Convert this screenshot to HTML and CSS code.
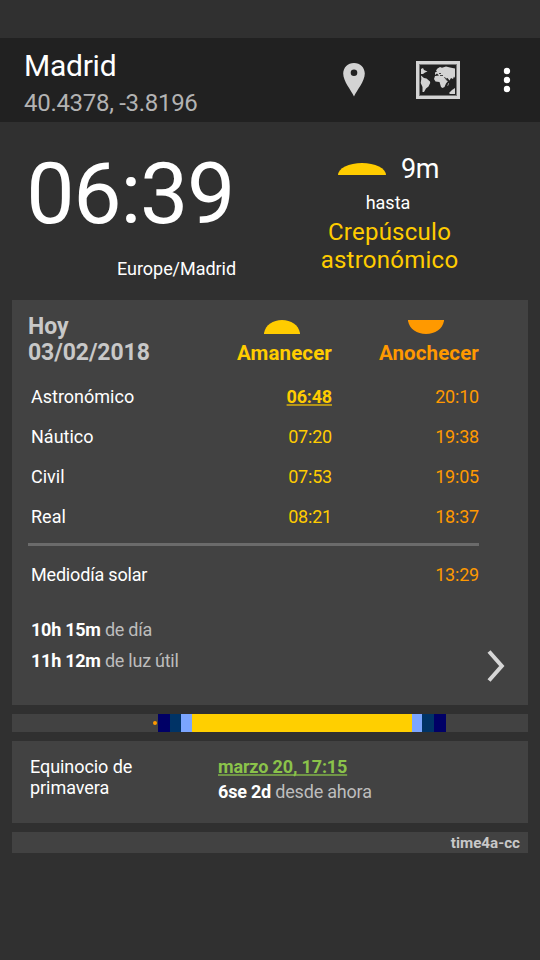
FILE: index.html
```html
<!DOCTYPE html>
<html lang="es">
<head>
<meta charset="utf-8">
<title>Madrid</title>
<link rel="stylesheet" href="styles.css">
</head>
<body>
<header class="appbar">
  <div class="place">
    <h1 class="place-name">Madrid</h1>
    <div class="place-coords">40.4378, -3.8196</div>
  </div>
  <svg class="icon-pin" width="24" height="36" viewBox="0 0 24 36"><path fill="#d3d3d3" fill-rule="evenodd" d="M12 1C5.800 1 1.200 5.600 1.200 11.600C1.200 19.500 9.300 28.500 12 34.500C14.700 28.500 22.800 19.500 22.800 11.600C22.800 5.600 18.200 1 12 1ZM12 7.400A3.300 3.300 0 1 1 12 14A3.300 3.300 0 1 1 12 7.400Z"/></svg>
  <svg class="icon-map" width="44" height="38" viewBox="0 0 44 38">
    <rect x="1.500" y="1.500" width="41" height="35" fill="none" stroke="#d3d3d3" stroke-width="3"/>
    <rect x="3.500" y="3.500" width="37" height="31" fill="none" stroke="#777" stroke-width="1"/>
    <g fill="#d3d3d3">
      <path d="M5 8L7 7L8 9L11.500 10.500L9 11.500L7 13L5 13Z"/>
      <path d="M5 14.500L8 17L10.500 17.500L14 20.500L14.200 22L12.500 25.500L10 27.500L8 31L6.500 31L6.500 26L4.700 22L5.300 18Z"/>
      <path d="M19 11.500L21 10.500L20 9.500L21.500 7.500L24 6L26 6.800L30 5.500L34 6.500L39 7.500V17L38 15.500L37 18L35 17L33.500 19.500L31.500 17L30 17.500L30.500 19.500L32 20L30 22.500L28.500 26L26.500 27L25 26L23.500 21L19.500 20.500L18 18L19 15L23 14.500L21 12.500L19 14Z"/>
      <path d="M33 32L36 29L39 27V33H34Z"/>
      <path d="M32 22.500L33 22L32 25H31.500Z"/>
    </g>
    <path fill="none" stroke="#212121" stroke-width=".8" d="M23 12.500H25M24 14.500H27M28.500 16L30 18.500"/>
  </svg>
  <svg class="icon-more" width="8" height="26" viewBox="0 0 8 26" fill="#fff"><circle cx="4" cy="4" r="3.200"/><circle cx="4" cy="13" r="3.200"/><circle cx="4" cy="22" r="3.200"/></svg>
</header>

<section class="now">
  <div class="clock">
    <div class="clock-time">06:39</div>
    <div class="clock-zone">Europe/Madrid</div>
  </div>
  <div class="next">
    <div class="next-head">
      <svg width="48" height="12" viewBox="0 0 48 12"><path fill="#ffcc00" d="M0 12A24 12 0 0 1 48 12Z"/></svg>
      <span class="next-left">9m</span>
    </div>
    <div class="next-until">hasta</div>
    <div class="next-event">Crepúsculo<br>astronómico</div>
  </div>
</section>

<main class="cards">
  <section class="card today">
    <div class="grid head">
      <div class="date">Hoy<br>03/02/2018</div>
      <div class="col rise"><svg width="36" height="14" viewBox="0 0 36 14"><path fill="#ffcc00" d="M0 14V13C1.500 5 9 0 18 0S34.500 5 36 13V14Z"/></svg><span>Amanecer</span></div>
      <div class="col set"><svg width="36" height="14" viewBox="0 0 36 14"><path fill="#ff9900" d="M0 0V1C1.500 9 9 14 18 14S34.500 9 36 1V0Z"/></svg><span>Anochecer</span></div>
    </div>
    <div class="grid row"><span>Astronómico</span><span class="rise"><b class="link">06:48</b></span><span class="set">20:10</span></div>
    <div class="grid row"><span>Náutico</span><span class="rise">07:20</span><span class="set">19:38</span></div>
    <div class="grid row"><span>Civil</span><span class="rise">07:53</span><span class="set">19:05</span></div>
    <div class="grid row"><span>Real</span><span class="rise">08:21</span><span class="set">18:37</span></div>
    <div class="rule"></div>
    <div class="grid row noon"><span>Mediodía solar</span><span></span><span class="set">13:29</span></div>
    <div class="summary">
      <div class="lengths">
        <div><b>10h 15m</b> de día</div>
        <div><b>11h 12m</b> de luz útil</div>
      </div>
      <svg class="chevron" width="20" height="34" viewBox="0 0 20 34"><path fill="none" stroke="#d6d6d6" stroke-width="4" d="M3 2.500L15.800 17L3 31.500"/></svg>
    </div>
  </section>

  <div class="daybar">
    <i class="moment"></i><i class="astro a"></i><i class="naut b"></i><i class="civil b"></i><i class="sun"></i><i class="civil c"></i><i class="naut a"></i><i class="astro a"></i>
  </div>

  <section class="card season">
    <div class="season-name">Equinocio de primavera</div>
    <div class="season-when">
      <div><b class="link">marzo 20, 17:15</b></div>
      <div><b class="white">6se 2d</b> desde ahora</div>
    </div>
  </section>

  <footer class="card source">time4a-cc</footer>
</main>
</body>
</html>
```
FILE: styles.css
```css
* { box-sizing: border-box; }
body {
  margin: 0;
  padding-top: 38px;
  min-height: 960px;
  background: #303030;
  color: #fff;
  font-family: Roboto, "Liberation Sans", sans-serif;
  font-size: 18px;
}
svg { display: block; flex: none; }

.appbar {
  display: flex;
  align-items: flex-start;
  height: 84px;
  padding-left: 24px;
  background: #212121;
}
.place { width: 318px; padding-top: 8px; }
.place-name { margin: 0; font-size: 30px; font-weight: 400; line-height: 39px; letter-spacing: -0.25px; }
.place-coords { font-size: 24px; line-height: 36px; letter-spacing: -0.3px; color: #b3b3b3; }
.icon-pin { margin-top: 24px; }
.icon-map { margin: 23px 0 0 50px; }
.icon-more { margin: 29px 0 0 43px; }

.now { display: flex; height: 178px; }
.clock { width: 236px; padding-top: 24px; text-align: right; }
.clock-time { padding-right: 2px; font-size: 86px; line-height: 96px; letter-spacing: -1.3px; }
.clock-zone { margin-top: 17px; line-height: 20px; letter-spacing: -0.05px; }
.next { width: 304px; padding-top: 31px; text-align: center; }
.next-head { display: flex; align-items: center; height: 32px; padding-left: 102px; }
.next-left { margin-left: 15px; font-size: 27px; line-height: 32px; letter-spacing: -0.3px; }
.next-until { line-height: 36px; }
.next-event { margin-top: -3px; padding-left: 3px; font-size: 24px; line-height: 28px; letter-spacing: 0.25px; color: #ffcc00; }

.cards { display: flex; flex-direction: column; gap: 9px; padding: 0 12px; }
.card { background: #424242; }
.today { height: 405px; padding: 13px 49px 0 16px; }
.grid { display: grid; grid-template-columns: 1fr 120px 147px; }
.head { height: 64px; }
.date { padding-top: 1px; font-size: 23px; line-height: 26px; font-weight: 700; letter-spacing: -0.08px; color: #c8c8c8; }
.col { display: flex; flex-direction: column; align-items: flex-end; padding-top: 7px; font-size: 20.5px; font-weight: 700; line-height: 38px; letter-spacing: 0.12px; }
.col svg { margin-right: 32px; }
.col.set svg { margin-right: 35px; }
.rise { color: #ffcc00; text-align: right; }
.set { color: #ff9900; text-align: right; }
.row { line-height: 40px; }
.row > :first-child { padding-left: 3px; }
.row .rise, .row .set { letter-spacing: -0.2px; }
.rule { height: 3px; margin-top: 6px; background: #6b6b6b; }
.noon { margin-top: 9px; letter-spacing: -0.18px; }
.link { text-decoration: underline 2px rgba(255, 204, 0, 0.6); text-underline-offset: 1px; text-decoration-skip-ink: none; }
.summary { display: flex; justify-content: space-between; margin: 19px -27px 0 3px; }
.lengths { line-height: 31px; letter-spacing: -0.25px; color: #bdbdbd; }
.lengths b, .white { color: #fff; }
.chevron { margin-top: 35px; }

.daybar { display: flex; align-items: center; height: 18px; padding-left: 141px; background: #424242; }
.daybar i { height: 18px; }
.daybar .moment { width: 4px; height: 4px; margin-right: 1px; border-radius: 50%; background: #ff9900; }
.astro { background: #000066; }
.naut { background: #003366; }
.civil { background: #7ba5ff; }
.sun { width: 220px; background: #ffcf00; }
.a { width: 12px; }
.b { width: 11px; }
.c { width: 10px; }

.season { display: flex; height: 82px; padding: 13px 18px 0; }
.season-name { width: 130px; margin-right: 58px; padding-top: 2px; line-height: 21px; letter-spacing: -0.06px; }
.season-when { line-height: 25px; letter-spacing: -0.2px; color: #bdbdbd; }
.season-when .link { color: #8bc34a; letter-spacing: -0.15px; text-decoration-color: rgba(139, 195, 74, 0.65); }
.source { height: 21px; padding: 1px 8px 0 0; font-size: 15.200px; font-weight: 700; line-height: 21px; text-align: right; color: #c8c8c8; }
```
